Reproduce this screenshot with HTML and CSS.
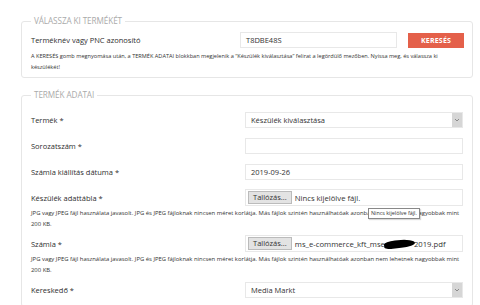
FILE: index.html
```html
<!DOCTYPE html>
<html lang="hu">
<head>
<meta charset="utf-8">
<link rel="stylesheet" href="styles.css">
</head>
<body>
<div class="page">
  <fieldset class="box box-search">
    <legend>Válassza ki termékét</legend>
    <div class="row row-search">
      <label class="lbl">Terméknév vagy PNC azonosító</label>
      <div class="ctl ctl-search">
        <div class="input input-short">T8DBE48S</div>
        <div class="btn">KERESÉS</div>
      </div>
    </div>
    <p class="help">A KERESÉS gomb megnyomása után, a TERMÉK ADATAI blokkban megjelenik a “Készülék kiválasztása” felirat a legördülő mezőben. Nyissa meg, és válassza ki készülékét!</p>
  </fieldset>

  <fieldset class="box box-data">
    <legend>Termék adatai</legend>
    <div class="row">
      <label class="lbl">Termék *</label>
      <div class="ctl"><div class="input select">Készülék kiválasztása<span class="arrow"><svg width="6" height="4" viewBox="0 0 6 4"><path d="M1 1l2 2 2-2" fill="none" stroke="#777" stroke-width="0.8"/></svg></span></div></div>
    </div>
    <div class="row">
      <label class="lbl">Sorozatszám *</label>
      <div class="ctl"><div class="input"></div></div>
    </div>
    <div class="row row-date">
      <label class="lbl">Számla kiállítás dátuma *</label>
      <div class="ctl"><div class="input">2019-09-26</div></div>
    </div>
    <div class="row row-file">
      <label class="lbl">Készülék adattábla *</label>
      <div class="ctl"><div class="input file"><span class="fbtn">Tallózás...</span><span class="fname">Nincs kijelölve fájl.</span></div></div>
    </div>
    <p class="help help-file">JPG vagy JPEG fájl használata javasolt. JPG és JPEG fájloknak nincsen méret korlátja. Más fájlok szintén használhatóak azonban nem lehetnek nagyobbak mint 200 KB.</p>
    <div class="row row-file">
      <label class="lbl">Számla *</label>
      <div class="ctl"><div class="input file"><span class="fbtn">Tallózás...</span><span class="fname">ms_e-commerce_kft_mse<span class="redact"></span>2019.pdf</span></div></div>
    </div>
    <p class="help help-file help-file2">JPG vagy JPEG fájl használata javasolt. JPG és JPEG fájloknak nincsen méret korlátja. Más fájlok szintén használhatóak azonban nem lehetnek nagyobbak mint 200 KB.</p>
    <div class="row row-last">
      <label class="lbl">Kereskedő *</label>
      <div class="ctl"><div class="input select">Media Markt<span class="arrow"><svg width="6" height="4" viewBox="0 0 6 4"><path d="M1 1l2 2 2-2" fill="none" stroke="#777" stroke-width="0.8"/></svg></span></div></div>
    </div>
    <div class="tooltip">Nincs kijelölve fájl.</div>
  </fieldset>
</div>
</body>
</html>
```

FILE: styles.css
```css
* { box-sizing: border-box; }
html, body { margin: 0; padding: 0; background: #fff; }
body {
  font-family: "Open Sans", "Noto Sans", sans-serif;
  color: #333;
  width: 480px;
  height: 305px;
  overflow: hidden;
}
.page { padding: 14px 7px 0 21px; }
.box {
  position: relative;
  margin: 0;
  width: 452px;
  border: 1px solid #e6e6e6;
  border-radius: 3px;
  padding: 0 5px 0 9px;
}
.box legend {
  font-size: 8.2px;
  color: #aaa;
  text-transform: uppercase;
  padding: 0 3px;
  margin-left: 0;
  letter-spacing: -0.1px;
  line-height: 14px;
}
.box-search { padding-top: 4px; padding-bottom: 5px; }
.box-data { margin-top: 10px; padding-top: 10px; padding-bottom: 8px; }
.row { display: flex; align-items: center; height: 16px; margin-bottom: 10px; }
.row-search { margin-bottom: 0; }
.row-date { margin-bottom: 9px; }
.row-file { height: 17px; margin-bottom: 2px; }
.row-last { margin-bottom: 0; }
.lbl { width: 214px; font-size: 7.5px; color: #2e2e2e; white-space: nowrap; }
.ctl { width: 218px; display: flex; align-items: center; }
.ctl-search { justify-content: space-between; margin-left: -5px; width: 224px; }
.input {
  position: relative;
  width: 218px;
  height: 16px;
  border: 1px solid #e8e8e8;
  font-size: 7.5px;
  line-height: 14px;
  padding: 0 5px;
  color: #333;
  background: #fff;
}
.input-short { width: 157px; }
.btn {
  width: 56px;
  height: 15px;
  background: #e4604a;
  color: #fff;
  font-weight: 700;
  font-size: 7px;
  line-height: 15px;
  text-align: center;
  letter-spacing: 0.2px;
}
.select .arrow {
  position: absolute;
  right: 0;
  top: 0;
  width: 10px;
  height: 14px;
  background: #d6d6d6;
  display: flex;
  align-items: center;
  justify-content: center;
}
.file { height: 17px; padding: 1px 2px; display: flex; align-items: center; }
.fbtn {
  display: inline-block;
  background: #e3e3e3;
  border: 1px solid #bbb;
  font-size: 7.5px;
  line-height: 11px;
  padding: 0 4px;
  color: #333;
}
.fname { font-size: 7.7px; margin-left: 3px; color: #333; white-space: nowrap; }
.redact {
  display: inline-block;
  width: 31px;
  height: 8px;
  background: #000;
  border-radius: 40% 60% 50% 30%;
  transform: rotate(-6deg);
  vertical-align: -1px;
  margin: 0 -1px;
}
.help {
  margin: 0;
  font-size: 5.6px;
  line-height: 10.5px;
  color: #333;
}
.help-file { font-size: 5.9px; line-height: 10.5px; }
.box-search .help { margin-top: 3px; }
.help-file { margin-bottom: 6px; }
.help-file2 { margin-bottom: 7px; }
.tooltip {
  position: absolute;
  left: 346px;
  top: 106px;
  font-size: 5.4px;
  line-height: 9px;
  padding: 0 2px;
  background: #fff;
  border: 1px solid #888;
  color: #333;
  box-shadow: 1px 1px 1px rgba(0,0,0,0.15);
  white-space: nowrap;
}
```
